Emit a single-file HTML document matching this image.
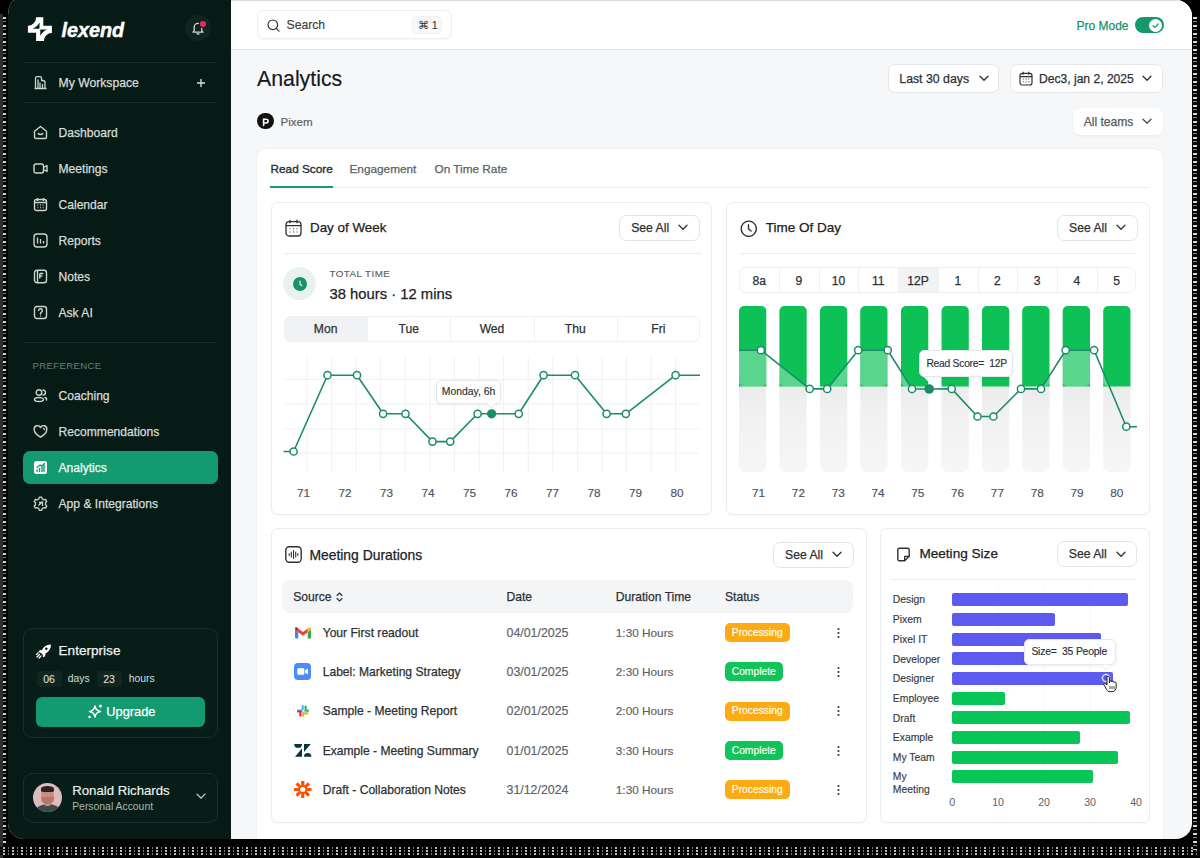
<!DOCTYPE html><html><head><meta charset="utf-8"><style>
*{box-sizing:border-box;margin:0;padding:0}
html,body{width:1200px;height:858px;overflow:hidden;background:#000}
body{position:relative;font-family:"Liberation Sans",sans-serif;}
.a{position:absolute;white-space:nowrap}
</style></head><body>
<div class="a" style="left:0px;top:14px;width:2.5px;height:844px;background:#2e2e2e"></div>
<div class="a" style="left:2.5px;top:14px;width:3.5px;height:830px;background:repeating-linear-gradient(180deg,#000 0 3px,#d8d8d8 3px 5px,#000 5px 7px,#888 7px 8px)"></div>
<div class="a" style="left:0px;top:847px;width:1200px;height:9px;background:repeating-linear-gradient(90deg,#000 0 3px,#bbb 3px 5px,#000 5px 8px,#777 8px 9px),#000;-webkit-mask:repeating-linear-gradient(180deg,#000 0 2px,transparent 2px 3px)"></div>
<div class="a" style="left:1193px;top:14px;width:3.5px;height:836px;background:repeating-linear-gradient(180deg,#000 0 3px,#d8d8d8 3px 5px,#000 5px 7px,#888 7px 8px)"></div>
<div class="a" style="left:7.5px;top:0;width:1184.5px;height:839px;border-radius:7px 16px 16px 16px / 16px 16px 16px 16px;overflow:hidden;background:#f6f7f9">
<div class="a" style="left:-7.5px;top:0;width:1200px;height:858px">
<div class="a" style="left:0px;top:0px;width:231px;height:858px;background:#061b16"></div>
<div class="a" style="left:231px;top:0px;width:970px;height:50px;background:#fff;border-bottom:1px solid #e3e5e8;border-top:1px solid #dcdcdc"></div>
<svg class="a" style="left:25px;top:15px;" width="30" height="29" viewBox="0 0 30 29" fill="none"><path fill="#fff" fill-rule="evenodd" d="M11.1 2.2H18.3V10.8H26.9V17.9A8.1 8.1 0 0 0 18.9 26H11.1V17.8H2.9V10.8A8.3 8.6 0 0 0 11.1 2.2Z M14.6 7.3Q12.6 11.6 7.6 13.8H14.4Z M22 14.6Q17.6 16.4 15.3 21V14.6Z"/></svg>
<div class="a" style="left:61.5px;top:19.6px;line-height:20px;font-size:19.8px;color:#fff;font-weight:700;font-style:italic;-webkit-text-stroke:.45px #fff;">lexend</div>
<div class="a" style="left:185px;top:15px;width:26px;height:26px;border-radius:50%;background:#0f2520"></div>
<svg class="a" style="left:191px;top:21px;" width="14" height="14" viewBox="0 0 14 14" fill="none"><path d="M3.2 9.8V6.2a3.8 3.8 0 0 1 7.6 0v3.6l1.2 1.4H2z" stroke="#cdd5d2" stroke-width="1.3" stroke-linejoin="round"/><path d="M5.8 12.3a1.3 1.3 0 0 0 2.4 0" stroke="#cdd5d2" stroke-width="1.3"/></svg>
<div class="a" style="left:200px;top:21.3px;width:5.6px;height:5.6px;border-radius:50%;background:#e8295a;box-shadow:0 0 0 1px #0a1f1a"></div>
<div class="a" style="left:24px;top:62px;width:193px;height:1px;background:#192f2a"></div>
<div class="a" style="left:24px;top:102px;width:193px;height:1px;background:#192f2a"></div>
<svg class="a" style="left:33px;top:75px;" width="15" height="15" viewBox="0 0 15 15" fill="none"><path d="M2.5 13.5V3.2a1.5 1.5 0 0 1 1.5-1.5h3a1.5 1.5 0 0 1 1.5 1.5v2.3h1.5a2 2 0 0 1 2 2v6M1.5 13.5h12M5 4.5v9M7 7.5v6M9.5 9v4.5" stroke="#cdd5d2" stroke-width="1.3" stroke-linejoin="round"/></svg>
<div class="a" style="left:58.5px;top:72.5px;line-height:20px;font-size:12.2px;color:#d6ddda;-webkit-text-stroke:0.25px #d6ddda;">My Workspace</div>
<svg class="a" style="left:196px;top:78px;" width="10" height="10" viewBox="0 0 10 10" fill="none"><path d="M5 1v8M1 5h8" stroke="#d6ddda" stroke-width="1.4"/></svg>
<svg class="a" style="left:33px;top:125.0px;" width="15" height="15" viewBox="0 0 15 15" fill="none"><path d="M1.5 6.2L7.5 1.5l6 4.7v5.8a1.5 1.5 0 0 1-1.5 1.5H3a1.5 1.5 0 0 1-1.5-1.5z" stroke="#cdd5d2" stroke-width="1.4" stroke-linejoin="round"/><path d="M5.2 8.6q2.3 1.8 4.6 0" stroke="#cdd5d2" stroke-width="1.4" stroke-linecap="round"/></svg>
<div class="a" style="left:58.5px;top:122.5px;line-height:20px;font-size:12.1px;color:#d6ddda;-webkit-text-stroke:0.25px #d6ddda;">Dashboard</div>
<svg class="a" style="left:33px;top:161.0px;" width="15" height="15" viewBox="0 0 15 15" fill="none"><rect x="1" y="3" width="9.5" height="9" rx="2" stroke="#cdd5d2" stroke-width="1.4"/><path d="M10.5 6.5l3.5-2v6l-3.5-2" stroke="#cdd5d2" stroke-width="1.4" stroke-linejoin="round"/></svg>
<div class="a" style="left:58.5px;top:158.5px;line-height:20px;font-size:12.1px;color:#d6ddda;-webkit-text-stroke:0.25px #d6ddda;">Meetings</div>
<svg class="a" style="left:33px;top:197.0px;" width="15" height="15" viewBox="0 0 15 15" fill="none"><rect x="1.5" y="2.5" width="12" height="11" rx="2" stroke="#cdd5d2" stroke-width="1.4"/><path d="M1.5 5.5h12M4.5 1v3M10.5 1v3" stroke="#cdd5d2" stroke-width="1.4"/><path d="M4.5 8h.8M7.1 8h.8M9.7 8h.8M4.5 10.5h.8M7.1 10.5h.8M9.7 10.5h.8" stroke="#cdd5d2" stroke-width="1.3"/></svg>
<div class="a" style="left:58.5px;top:194.5px;line-height:20px;font-size:12.1px;color:#d6ddda;-webkit-text-stroke:0.25px #d6ddda;">Calendar</div>
<svg class="a" style="left:33px;top:233.0px;" width="15" height="15" viewBox="0 0 15 15" fill="none"><rect x="1" y="1" width="13" height="13" rx="3" stroke="#cdd5d2" stroke-width="1.4"/><path d="M4.5 4.5v6M7.5 6v4.5M10.5 8v2.5" stroke="#cdd5d2" stroke-width="1.3"/></svg>
<div class="a" style="left:58.5px;top:230.5px;line-height:20px;font-size:12.1px;color:#d6ddda;-webkit-text-stroke:0.25px #d6ddda;">Reports</div>
<svg class="a" style="left:33px;top:269.0px;" width="15" height="15" viewBox="0 0 15 15" fill="none"><rect x="1.5" y="1.2" width="12" height="12.6" rx="2.5" stroke="#cdd5d2" stroke-width="1.4"/><path d="M4.5 1.5v12M6.8 4.5h3.5M6.8 4.5v5M6.8 7h2.5" stroke="#cdd5d2" stroke-width="1.4"/></svg>
<div class="a" style="left:58.5px;top:266.5px;line-height:20px;font-size:12.1px;color:#d6ddda;-webkit-text-stroke:0.25px #d6ddda;">Notes</div>
<svg class="a" style="left:33px;top:305.0px;" width="15" height="15" viewBox="0 0 15 15" fill="none"><rect x="1.5" y="1.5" width="12" height="12" rx="2.5" stroke="#cdd5d2" stroke-width="1.4"/><path d="M5.6 5.6a1.9 1.9 0 1 1 2.6 1.8c-.5.2-.7.6-.7 1.1v.5" stroke="#cdd5d2" stroke-width="1.4" stroke-linecap="round"/><circle cx="7.5" cy="10.9" r=".7" fill="#cdd5d2"/></svg>
<div class="a" style="left:58.5px;top:302.5px;line-height:20px;font-size:12.1px;color:#d6ddda;-webkit-text-stroke:0.25px #d6ddda;">Ask AI</div>
<div class="a" style="left:24px;top:342px;width:193px;height:1px;background:#192f2a"></div>
<div class="a" style="left:32.5px;top:356px;line-height:20px;font-size:9.6px;color:#6d7d78;letter-spacing:0.35px;">PREFERENCE</div>
<svg class="a" style="left:33px;top:388.0px;" width="15" height="15" viewBox="0 0 15 15" fill="none"><circle cx="6" cy="4.5" r="2.8" stroke="#cdd5d2" stroke-width="1.4"/><ellipse cx="6" cy="11.5" rx="4.5" ry="2" stroke="#cdd5d2" stroke-width="1.4"/><path d="M10 2a2.5 2.5 0 0 1 0 5M12 9.5q2 .8 1.5 2.5" stroke="#cdd5d2" stroke-width="1.4" stroke-linecap="round"/></svg>
<div class="a" style="left:58.5px;top:385.5px;line-height:20px;font-size:12.1px;color:#d6ddda;-webkit-text-stroke:0.25px #d6ddda;">Coaching</div>
<svg class="a" style="left:33px;top:424.0px;" width="15" height="15" viewBox="0 0 15 15" fill="none"><path d="M7.5 13.2S1.2 9.5 1.2 5.2A3.3 3.3 0 0 1 7.5 3.6a3.3 3.3 0 0 1 6.3 1.6c0 4.3-6.3 8-6.3 8z" stroke="#cdd5d2" stroke-width="1.4" stroke-linejoin="round"/><path d="M10.3 4.3q1 .3 1.3 1.3" stroke="#cdd5d2" stroke-width="1.3" stroke-linecap="round"/></svg>
<div class="a" style="left:58.5px;top:421.5px;line-height:20px;font-size:12.1px;color:#d6ddda;-webkit-text-stroke:0.25px #d6ddda;">Recommendations</div>
<div class="a" style="left:23px;top:451px;width:195px;height:33px;background:#149a70;border-radius:7px"></div>
<svg class="a" style="left:33px;top:460px;" width="15" height="15" viewBox="0 0 15 15" fill="none"><rect x="1" y="1" width="13" height="13" rx="2.5" fill="#fff"/><path d="M4 11.5v-1.5M6.5 11.5V8.5M9 11.5V7M11 11.5V5.5M4 7.5l3-2.5 2 1L11.5 3.5" stroke="#149a70" stroke-width="1.4" stroke-linecap="round"/></svg>
<div class="a" style="left:58.5px;top:457.5px;line-height:20px;font-size:12.1px;color:#f2fbf7;-webkit-text-stroke:0.25px #f2fbf7;">Analytics</div>
<svg class="a" style="left:33px;top:496.0px;" width="15" height="15" viewBox="0 0 15 15" fill="none"><path d="M6.3 1.2h2.4l.5 1.8 1.6.9 1.8-.5 1.2 2.1-1.3 1.3v1.9l1.3 1.3-1.2 2.1-1.8-.5-1.6.9-.5 1.8H6.3l-.5-1.8-1.6-.9-1.8.5L1.2 10l1.3-1.3V6.8L1.2 5.5l1.2-2.1 1.8.5 1.6-.9z" stroke="#cdd5d2" stroke-width="1.3" stroke-linejoin="round"/><path d="M5.5 9.5L9.5 5.5M6 6.5h3.5V10" stroke="#cdd5d2" stroke-width="1.3"/></svg>
<div class="a" style="left:58.5px;top:493.5px;line-height:20px;font-size:12.1px;color:#d6ddda;-webkit-text-stroke:0.25px #d6ddda;">App &amp; Integrations</div>
<div class="a" style="left:22.5px;top:628px;width:195px;height:110px;border:1px solid #1b2e2a;border-radius:9px;background:#071d18"></div>
<svg class="a" style="left:36px;top:643px;" width="16" height="16" viewBox="0 0 16 16" fill="none"><path d="M14.5 1.5c-4 .2-6.8 2.2-8.6 5.5l-2.3.3-1.5 2 2.6.4 2.1 2.1.4 2.6 2-1.5.3-2.3c3.3-1.8 5.3-4.6 5.5-8.6z" fill="#fff"/><circle cx="10.3" cy="5.7" r="1.3" fill="#071d18"/><path d="M3.5 11.5L1 14M5 13l-2 2M2 10l-1.5 1.5" stroke="#fff" stroke-width="1.2" stroke-linecap="round"/></svg>
<div class="a" style="left:58.5px;top:641px;line-height:20px;font-size:13.6px;color:#f1f4f3;-webkit-text-stroke:0.25px #f1f4f3;">Enterprise</div>
<div class="a" style="left:36.5px;top:670.5px;width:25px;height:16px;background:#112621;border-radius:3px"></div>
<div class="a" style="left:36.5px;top:668.5px;line-height:20px;font-size:10.5px;color:#e3e8e6;width:25px;text-align:center;">06</div>
<div class="a" style="left:67.7px;top:668.5px;line-height:20px;font-size:10.4px;color:#d6ddda;">days</div>
<div class="a" style="left:96.5px;top:670.5px;width:25px;height:16px;background:#112621;border-radius:3px"></div>
<div class="a" style="left:96.5px;top:668.5px;line-height:20px;font-size:10.5px;color:#e3e8e6;width:25px;text-align:center;">23</div>
<div class="a" style="left:128.7px;top:668.5px;line-height:20px;font-size:10.4px;color:#d6ddda;">hours</div>
<div class="a" style="left:36px;top:696.5px;width:169px;height:30px;background:#149a70;border-radius:6px"></div>
<svg class="a" style="left:87px;top:703px;" width="16" height="16" viewBox="0 0 16 16" fill="none"><path d="M8 2.9Q8.7 7.8 13.6 8.5Q8.7 9.2 8 14.1Q7.3 9.2 2.4 8.5Q7.3 7.8 8 2.9Z" stroke="#fff" stroke-width="1.4" stroke-linejoin="round"/><circle cx="13.4" cy="3" r="1.5" fill="#fff"/><circle cx="2.6" cy="14" r="1.3" fill="#fff"/></svg>
<div class="a" style="left:106.3px;top:701.5px;line-height:20px;font-size:12.8px;color:#fff;-webkit-text-stroke:0.25px #fff;">Upgrade</div>
<div class="a" style="left:22.5px;top:772.5px;width:195px;height:50px;border:1px solid #1b2e2a;border-radius:9px;background:#071d18"></div>
<div class="a" style="left:32.7px;top:782.5px;width:29.5px;height:29.5px;border-radius:50%;background:#dcbcc0;overflow:hidden"><div class="a" style="left:3px;top:21px;width:24px;height:14px;border-radius:50% 50% 0 0;background:#3f4b49"></div><div class="a" style="left:11.5px;top:17px;width:7px;height:6px;background:#c4907e;border-radius:0 0 40% 40%"></div><div class="a" style="left:8.5px;top:5px;width:12.5px;height:16px;border-radius:45% 45% 48% 48%;background:#c98e7c"></div><div class="a" style="left:8.5px;top:14px;width:12.5px;height:7px;border-radius:0 0 50% 50%;background:#7a4a3a;opacity:.3"></div><div class="a" style="left:8px;top:3.5px;width:13.5px;height:5.5px;border-radius:50% 50% 25% 25%;background:#2a2422"></div></div>
<div class="a" style="left:72.2px;top:781px;line-height:20px;font-size:13.2px;color:#eef2f0;-webkit-text-stroke:0.15px #eef2f0;">Ronald Richards</div>
<div class="a" style="left:72.2px;top:797px;line-height:20px;font-size:10.4px;color:#aab6b2;">Personal Account</div>
<svg class="a" style="left:196px;top:793px;" width="10" height="7" viewBox="0 0 10 7" fill="none"><path d="M1 1.2l4 4 4-4" stroke="#d6ddda" stroke-width="1.2" stroke-linecap="round" stroke-linejoin="round"/></svg>
<div class="a" style="left:257px;top:10.3px;width:195px;height:28.7px;background:#fff;border:1px solid #eceef0;border-radius:7px;box-shadow:0 1px 2px rgba(16,24,40,.04)"></div>
<svg class="a" style="left:267px;top:19px;" width="13" height="13" viewBox="0 0 13 13" fill="none"><circle cx="5.8" cy="5.8" r="4.8" stroke="#2f3439" stroke-width="1.2"/><path d="M9.3 9.3l2.8 2.8" stroke="#2f3439" stroke-width="1.2" stroke-linecap="round"/></svg>
<div class="a" style="left:286.5px;top:15px;line-height:20px;font-size:12.2px;color:#3a3f44;-webkit-text-stroke:0.15px #3a3f44;">Search</div>
<div class="a" style="left:412px;top:16px;width:30px;height:18px;background:#f7f8f9;border:1px solid #f0f1f3;border-radius:5px"></div>
<div class="a" style="left:417.5px;top:15px;line-height:20px;font-size:11px;color:#2f3439;">&#8984;</div>
<div class="a" style="left:431.5px;top:15px;line-height:20px;font-size:11.5px;color:#2f3439;">1</div>
<div class="a" style="left:1076.5px;top:15.5px;line-height:20px;font-size:12px;color:#17936b;-webkit-text-stroke:0.25px #17936b;">Pro Mode</div>
<div class="a" style="left:1135px;top:17px;width:28.5px;height:16px;background:#15986c;border-radius:8px"></div>
<div class="a" style="left:1149px;top:18.5px;width:13px;height:13px;background:#fff;border-radius:50%"></div>
<svg class="a" style="left:1150px;top:19.5px;" width="11" height="11" viewBox="0 0 11 11" fill="none"><path d="M3 5.6l1.8 1.8L8.2 4" stroke="#15986c" stroke-width="1.2" stroke-linecap="round" stroke-linejoin="round"/></svg>
<div class="a" style="left:257px;top:69px;line-height:20px;font-size:21.3px;color:#15191d;-webkit-text-stroke:0.15px #15191d;">Analytics</div>
<div class="a" style="left:257px;top:112.5px;width:16.5px;height:16.5px;border-radius:50%;background:#111"></div>
<svg class="a" style="left:260px;top:115.5px;" width="11" height="11" viewBox="0 0 11 11" fill="none"><path d="M3.6 9.5V3.2h2.6a1.9 1.9 0 0 1 0 3.8H4" stroke="#fff" stroke-width="1.6" stroke-linecap="round"/></svg>
<div class="a" style="left:280.5px;top:111.5px;line-height:20px;font-size:11.6px;color:#5a6066;-webkit-text-stroke:0.15px #5a6066;">Pixem</div>
<div class="a" style="left:887.5px;top:64px;width:111.5px;height:28.5px;background:#fff;border:1px solid #e4e6e9;border-radius:7px"></div>
<div class="a" style="left:899.3px;top:68.5px;line-height:20px;font-size:12.3px;color:#2d3136;-webkit-text-stroke:0.25px #2d3136;">Last 30 days</div>
<svg class="a" style="left:978.5px;top:75px;" width="10" height="7" viewBox="0 0 10 7" fill="none"><path d="M1 1.3l4 4 4-4" stroke="#2d3136" stroke-width="1.3" stroke-linecap="round" stroke-linejoin="round"/></svg>
<div class="a" style="left:1009.5px;top:64px;width:153.5px;height:28.5px;background:#fff;border:1px solid #e4e6e9;border-radius:7px"></div>
<svg class="a" style="left:1019px;top:71px;" width="14" height="15" viewBox="0 0 14 15" fill="none"><rect x="1" y="2.3" width="12" height="11.7" rx="2.2" stroke="#2d3136" stroke-width="1.2"/><path d="M1 5.6h12M4.2 .8v3M9.8 .8v3" stroke="#2d3136" stroke-width="1.2"/><path d="M3.8 8h.9M6.6 8h.9M9.4 8h.9M3.8 10.8h.9M6.6 10.8h.9M9.4 10.8h.9" stroke="#2d3136" stroke-width="1"/></svg>
<div class="a" style="left:1039px;top:68.5px;line-height:20px;font-size:12.1px;color:#2d3136;-webkit-text-stroke:0.25px #2d3136;">Dec3, jan 2, 2025</div>
<svg class="a" style="left:1142px;top:75px;" width="10" height="7" viewBox="0 0 10 7" fill="none"><path d="M1 1.3l4 4 4-4" stroke="#2d3136" stroke-width="1.3" stroke-linecap="round" stroke-linejoin="round"/></svg>
<div class="a" style="left:1072.5px;top:107.5px;width:90px;height:27.5px;background:#fff;border-radius:7px;box-shadow:0 1px 3px rgba(16,24,40,.06)"></div>
<div class="a" style="left:1083.7px;top:111.5px;line-height:20px;font-size:12.1px;color:#555b61;-webkit-text-stroke:0.25px #555b61;">All teams</div>
<svg class="a" style="left:1142px;top:118px;" width="10" height="7" viewBox="0 0 10 7" fill="none"><path d="M1 1.3l4 4 4-4" stroke="#444a50" stroke-width="1.3" stroke-linecap="round" stroke-linejoin="round"/></svg>
<div class="a" style="left:257px;top:149px;width:906px;height:720px;background:#fff;border-radius:9px;box-shadow:0 0 0 1px #f0f1f3"></div>
<div class="a" style="left:270.5px;top:158.5px;line-height:20px;font-size:11.8px;color:#2a2e33;-webkit-text-stroke:0.35px #2a2e33;">Read Score</div>
<div class="a" style="left:349.5px;top:158.5px;line-height:20px;font-size:11.8px;color:#5b6167;-webkit-text-stroke:0.25px #5b6167;">Engagement</div>
<div class="a" style="left:434.5px;top:158.5px;line-height:20px;font-size:11.8px;color:#5b6167;-webkit-text-stroke:0.25px #5b6167;">On Time Rate</div>
<div class="a" style="left:270px;top:187px;width:880px;height:1px;background:#eef0f2"></div>
<div class="a" style="left:270px;top:186px;width:62.5px;height:2px;background:#1a9c72"></div>
<div class="a" style="left:270.5px;top:201.7px;width:441.5px;height:313.3px;background:#fff;border:1px solid #eaecef;border-radius:7px;box-shadow:0 1px 2px rgba(16,24,40,.03)"></div>
<svg class="a" style="left:285px;top:219px;" width="17" height="18" viewBox="0 0 17 18" fill="none"><rect x="1" y="2.6" width="15" height="14.4" rx="3" stroke="#2d3136" stroke-width="1.3"/><path d="M1 6.6h15M5 .8v3.5M12 .8v3.5" stroke="#2d3136" stroke-width="1.3"/><path d="M4.5 9.8h1M8 9.8h1M11.5 9.8h1M4.5 13h1M8 13h1M11.5 13h1" stroke="#2d3136" stroke-width="1.1"/></svg>
<div class="a" style="left:310px;top:218px;line-height:20px;font-size:13.4px;color:#1d2125;-webkit-text-stroke:0.25px #1d2125;">Day of Week</div>
<div class="a" style="left:619.2px;top:214.8px;width:80.5px;height:26px;background:#fff;border:1px solid #e3e5e8;border-radius:7px"></div>
<div class="a" style="left:631.2px;top:217.8px;line-height:20px;font-size:12.2px;color:#2d3136;-webkit-text-stroke:0.25px #2d3136;">See All</div>
<svg class="a" style="left:678.2px;top:224.3px;" width="10" height="7" viewBox="0 0 10 7" fill="none"><path d="M1 1.3l4 4 4-4" stroke="#2d3136" stroke-width="1.3" stroke-linecap="round" stroke-linejoin="round"/></svg>
<div class="a" style="left:283px;top:253px;width:418.5px;height:1px;background:#eceef0"></div>
<div class="a" style="left:282.8px;top:267px;width:33px;height:33px;background:#e8f3ee;border-radius:50%"></div>
<div class="a" style="left:292.8px;top:276.5px;width:14px;height:14px;background:#17936b;border-radius:50%"></div>
<svg class="a" style="left:292.8px;top:276.5px;" width="14" height="14" viewBox="0 0 14 14" fill="none"><path d="M7 4v3.2l1.8 1.4" stroke="#fff" stroke-width="1.1" stroke-linecap="round"/></svg>
<div class="a" style="left:329.5px;top:263.5px;line-height:20px;font-size:9.8px;color:#5b6166;-webkit-text-stroke:0.15px #5b6166;letter-spacing:0.45px;">TOTAL TIME</div>
<div class="a" style="left:329.5px;top:283.5px;line-height:20px;font-size:14.8px;color:#1d2125;-webkit-text-stroke:0.25px #1d2125;">38 hours &middot; 12 mins</div>
<div class="a" style="left:284px;top:316px;width:416px;height:25.5px;background:#fff;border:1px solid #eef0f2;border-radius:7px"></div>
<div class="a" style="left:284px;top:316px;width:83.2px;height:25.5px;background:#f1f2f4;border-radius:7px 0 0 7px"></div>
<div class="a" style="left:367.2px;top:317px;width:1px;height:23.5px;background:#eef0f2"></div>
<div class="a" style="left:450.4px;top:317px;width:1px;height:23.5px;background:#eef0f2"></div>
<div class="a" style="left:533.6px;top:317px;width:1px;height:23.5px;background:#eef0f2"></div>
<div class="a" style="left:616.8px;top:317px;width:1px;height:23.5px;background:#eef0f2"></div>
<div class="a" style="left:225.60000000000002px;width:200px;text-align:center;top:319px;line-height:20px;font-size:12.1px;color:#2d3136;-webkit-text-stroke:0.25px #2d3136;">Mon</div>
<div class="a" style="left:308.8px;width:200px;text-align:center;top:319px;line-height:20px;font-size:12.1px;color:#2d3136;-webkit-text-stroke:0.25px #2d3136;">Tue</div>
<div class="a" style="left:392.0px;width:200px;text-align:center;top:319px;line-height:20px;font-size:12.1px;color:#2d3136;-webkit-text-stroke:0.25px #2d3136;">Wed</div>
<div class="a" style="left:475.20000000000005px;width:200px;text-align:center;top:319px;line-height:20px;font-size:12.1px;color:#2d3136;-webkit-text-stroke:0.25px #2d3136;">Thu</div>
<div class="a" style="left:558.4px;width:200px;text-align:center;top:319px;line-height:20px;font-size:12.1px;color:#2d3136;-webkit-text-stroke:0.25px #2d3136;">Fri</div>
<svg class="a" style="left:0px;top:0px;" width="1200" height="858" viewBox="0 0 1200 858" fill="none"><path d="M307.0 355.8V472" stroke="#f0f1f3" stroke-width="1"/><path d="M331.6 355.8V472" stroke="#f0f1f3" stroke-width="1"/><path d="M356.2 355.8V472" stroke="#f0f1f3" stroke-width="1"/><path d="M380.7 355.8V472" stroke="#f0f1f3" stroke-width="1"/><path d="M405.3 355.8V472" stroke="#f0f1f3" stroke-width="1"/><path d="M429.9 355.8V472" stroke="#f0f1f3" stroke-width="1"/><path d="M454.5 355.8V472" stroke="#f0f1f3" stroke-width="1"/><path d="M479.1 355.8V472" stroke="#f0f1f3" stroke-width="1"/><path d="M503.6 355.8V472" stroke="#f0f1f3" stroke-width="1"/><path d="M528.2 355.8V472" stroke="#f0f1f3" stroke-width="1"/><path d="M552.8 355.8V472" stroke="#f0f1f3" stroke-width="1"/><path d="M577.4 355.8V472" stroke="#f0f1f3" stroke-width="1"/><path d="M602.0 355.8V472" stroke="#f0f1f3" stroke-width="1"/><path d="M626.5 355.8V472" stroke="#f0f1f3" stroke-width="1"/><path d="M651.1 355.8V472" stroke="#f0f1f3" stroke-width="1"/><path d="M675.7 355.8V472" stroke="#f0f1f3" stroke-width="1"/><path d="M284 379.3H700" stroke="#f0f1f3" stroke-width="1"/><path d="M284 404H700" stroke="#f0f1f3" stroke-width="1"/><path d="M284 428.8H700" stroke="#f0f1f3" stroke-width="1"/><path d="M284 453.2H700" stroke="#f0f1f3" stroke-width="1"/><path d="M283.5,451.5 L293.6,451.5 L327.5,375.2 L357,375.2 L383.1,413.8 L405.5,413.8 L432.5,441.6 L450.2,441.6 L477.6,413.8 L491.6,413.8 L518.7,413.8 L543.6,375.2 L575,375.2 L606.6,413.8 L625.8,413.8 L675.6,375.2 L700,375.2" stroke="#1a8d68" stroke-width="1.6" fill="none" stroke-linejoin="round"/><circle cx="293.6" cy="451.5" r="3.6" fill="#fff" stroke="#1a8d68" stroke-width="1.5"/><circle cx="327.5" cy="375.2" r="3.6" fill="#fff" stroke="#1a8d68" stroke-width="1.5"/><circle cx="357" cy="375.2" r="3.6" fill="#fff" stroke="#1a8d68" stroke-width="1.5"/><circle cx="383.1" cy="413.8" r="3.6" fill="#fff" stroke="#1a8d68" stroke-width="1.5"/><circle cx="405.5" cy="413.8" r="3.6" fill="#fff" stroke="#1a8d68" stroke-width="1.5"/><circle cx="432.5" cy="441.6" r="3.6" fill="#fff" stroke="#1a8d68" stroke-width="1.5"/><circle cx="450.2" cy="441.6" r="3.6" fill="#fff" stroke="#1a8d68" stroke-width="1.5"/><circle cx="477.6" cy="413.8" r="3.6" fill="#fff" stroke="#1a8d68" stroke-width="1.5"/><circle cx="491.6" cy="413.8" r="4.6" fill="#1a8d68"/><circle cx="518.7" cy="413.8" r="3.6" fill="#fff" stroke="#1a8d68" stroke-width="1.5"/><circle cx="543.6" cy="375.2" r="3.6" fill="#fff" stroke="#1a8d68" stroke-width="1.5"/><circle cx="575" cy="375.2" r="3.6" fill="#fff" stroke="#1a8d68" stroke-width="1.5"/><circle cx="606.6" cy="413.8" r="3.6" fill="#fff" stroke="#1a8d68" stroke-width="1.5"/><circle cx="625.8" cy="413.8" r="3.6" fill="#fff" stroke="#1a8d68" stroke-width="1.5"/><circle cx="675.6" cy="375.2" r="3.6" fill="#fff" stroke="#1a8d68" stroke-width="1.5"/></svg>
<div class="a" style="left:436.3px;top:379.5px;width:65px;height:24.5px;background:#fff;border:1px solid #e6e8eb;border-radius:5px;box-shadow:0 1px 3px rgba(0,0,0,.06)"></div>
<svg class="a" style="left:486px;top:403px;" width="10" height="6" viewBox="0 0 10 6" fill="none"><path d="M0 0L5 5L10 0" fill="#fff" stroke="#e6e8eb" stroke-width="1"/><path d="M0.5 -0.5H9.5" stroke="#fff" stroke-width="1.5"/></svg>
<div class="a" style="left:441.8px;top:381.5px;line-height:20px;font-size:10.4px;color:#2d3136;-webkit-text-stroke:0.15px #2d3136;">Monday, 6h</div>
<div class="a" style="left:203.60000000000002px;width:200px;text-align:center;top:483.3px;line-height:20px;font-size:11.8px;color:#4d5358;-webkit-text-stroke:0.15px #4d5358;">71</div>
<div class="a" style="left:245.10000000000002px;width:200px;text-align:center;top:483.3px;line-height:20px;font-size:11.8px;color:#4d5358;-webkit-text-stroke:0.15px #4d5358;">72</div>
<div class="a" style="left:286.6px;width:200px;text-align:center;top:483.3px;line-height:20px;font-size:11.8px;color:#4d5358;-webkit-text-stroke:0.15px #4d5358;">73</div>
<div class="a" style="left:328.1px;width:200px;text-align:center;top:483.3px;line-height:20px;font-size:11.8px;color:#4d5358;-webkit-text-stroke:0.15px #4d5358;">74</div>
<div class="a" style="left:369.6px;width:200px;text-align:center;top:483.3px;line-height:20px;font-size:11.8px;color:#4d5358;-webkit-text-stroke:0.15px #4d5358;">75</div>
<div class="a" style="left:411.1px;width:200px;text-align:center;top:483.3px;line-height:20px;font-size:11.8px;color:#4d5358;-webkit-text-stroke:0.15px #4d5358;">76</div>
<div class="a" style="left:452.6px;width:200px;text-align:center;top:483.3px;line-height:20px;font-size:11.8px;color:#4d5358;-webkit-text-stroke:0.15px #4d5358;">77</div>
<div class="a" style="left:494.1px;width:200px;text-align:center;top:483.3px;line-height:20px;font-size:11.8px;color:#4d5358;-webkit-text-stroke:0.15px #4d5358;">78</div>
<div class="a" style="left:535.6px;width:200px;text-align:center;top:483.3px;line-height:20px;font-size:11.8px;color:#4d5358;-webkit-text-stroke:0.15px #4d5358;">79</div>
<div class="a" style="left:577.1px;width:200px;text-align:center;top:483.3px;line-height:20px;font-size:11.8px;color:#4d5358;-webkit-text-stroke:0.15px #4d5358;">80</div>
<div class="a" style="left:726px;top:201.7px;width:424px;height:313.3px;background:#fff;border:1px solid #eaecef;border-radius:7px;box-shadow:0 1px 2px rgba(16,24,40,.03)"></div>
<svg class="a" style="left:739.5px;top:219.5px;" width="17.5" height="17.5" viewBox="0 0 17.5 17.5" fill="none"><circle cx="8.75" cy="8.75" r="7.6" stroke="#2d3136" stroke-width="1.4"/><path d="M8.5 4.8v4.2l2.6 2" stroke="#2d3136" stroke-width="1.4" stroke-linecap="round" stroke-linejoin="round"/></svg>
<div class="a" style="left:765.8px;top:218px;line-height:20px;font-size:13.5px;color:#1d2125;-webkit-text-stroke:0.25px #1d2125;">Time Of Day</div>
<div class="a" style="left:1057px;top:214.8px;width:80.5px;height:26px;background:#fff;border:1px solid #e3e5e8;border-radius:7px"></div>
<div class="a" style="left:1069px;top:217.8px;line-height:20px;font-size:12.2px;color:#2d3136;-webkit-text-stroke:0.25px #2d3136;">See All</div>
<svg class="a" style="left:1116px;top:224.3px;" width="10" height="7" viewBox="0 0 10 7" fill="none"><path d="M1 1.3l4 4 4-4" stroke="#2d3136" stroke-width="1.3" stroke-linecap="round" stroke-linejoin="round"/></svg>
<div class="a" style="left:739px;top:253px;width:398px;height:1px;background:#eceef0"></div>
<div class="a" style="left:739.3px;top:267.4px;width:397.2px;height:25.5px;background:#fff;border:1px solid #eef0f2;border-radius:7px"></div>
<div class="a" style="left:898.18px;top:267.9px;width:39.720000000000006px;height:24.5px;background:#f2f3f4"></div>
<div class="a" style="left:779.02px;top:268.4px;width:1px;height:23.5px;background:#eef0f2"></div>
<div class="a" style="left:818.74px;top:268.4px;width:1px;height:23.5px;background:#eef0f2"></div>
<div class="a" style="left:858.46px;top:268.4px;width:1px;height:23.5px;background:#eef0f2"></div>
<div class="a" style="left:898.18px;top:268.4px;width:1px;height:23.5px;background:#eef0f2"></div>
<div class="a" style="left:937.9px;top:268.4px;width:1px;height:23.5px;background:#eef0f2"></div>
<div class="a" style="left:977.62px;top:268.4px;width:1px;height:23.5px;background:#eef0f2"></div>
<div class="a" style="left:1017.3399999999999px;top:268.4px;width:1px;height:23.5px;background:#eef0f2"></div>
<div class="a" style="left:1057.06px;top:268.4px;width:1px;height:23.5px;background:#eef0f2"></div>
<div class="a" style="left:1096.78px;top:268.4px;width:1px;height:23.5px;background:#eef0f2"></div>
<div class="a" style="left:659.16px;width:200px;text-align:center;top:270.6px;line-height:20px;font-size:12.1px;color:#2d3136;-webkit-text-stroke:0.25px #2d3136;">8a</div>
<div class="a" style="left:698.88px;width:200px;text-align:center;top:270.6px;line-height:20px;font-size:12.1px;color:#2d3136;-webkit-text-stroke:0.25px #2d3136;">9</div>
<div class="a" style="left:738.6px;width:200px;text-align:center;top:270.6px;line-height:20px;font-size:12.1px;color:#2d3136;-webkit-text-stroke:0.25px #2d3136;">10</div>
<div class="a" style="left:778.32px;width:200px;text-align:center;top:270.6px;line-height:20px;font-size:12.1px;color:#2d3136;-webkit-text-stroke:0.25px #2d3136;">11</div>
<div class="a" style="left:818.04px;width:200px;text-align:center;top:270.6px;line-height:20px;font-size:12.1px;color:#2d3136;-webkit-text-stroke:0.25px #2d3136;">12P</div>
<div class="a" style="left:857.76px;width:200px;text-align:center;top:270.6px;line-height:20px;font-size:12.1px;color:#2d3136;-webkit-text-stroke:0.25px #2d3136;">1</div>
<div class="a" style="left:897.48px;width:200px;text-align:center;top:270.6px;line-height:20px;font-size:12.1px;color:#2d3136;-webkit-text-stroke:0.25px #2d3136;">2</div>
<div class="a" style="left:937.1999999999998px;width:200px;text-align:center;top:270.6px;line-height:20px;font-size:12.1px;color:#2d3136;-webkit-text-stroke:0.25px #2d3136;">3</div>
<div class="a" style="left:976.9199999999998px;width:200px;text-align:center;top:270.6px;line-height:20px;font-size:12.1px;color:#2d3136;-webkit-text-stroke:0.25px #2d3136;">4</div>
<div class="a" style="left:1016.6399999999999px;width:200px;text-align:center;top:270.6px;line-height:20px;font-size:12.1px;color:#2d3136;-webkit-text-stroke:0.25px #2d3136;">5</div>
<svg class="a" style="left:0px;top:0px;" width="1200" height="858" viewBox="0 0 1200 858" fill="none"><defs><linearGradient id="gb" x1="0" y1="0" x2="0" y2="1"><stop offset="0" stop-color="#ebebec"/><stop offset=".3" stop-color="#f1f1f2"/><stop offset="1" stop-color="#f6f6f7"/></linearGradient><clipPath id="bars"><rect x="739" y="306" width="27.3" height="80.5" rx="5"/><rect x="779.4" y="306" width="27.3" height="80.5" rx="5"/><rect x="820" y="306" width="27.3" height="80.5" rx="5"/><rect x="860.2" y="306" width="27.3" height="80.5" rx="5"/><rect x="901" y="306" width="27.3" height="80.5" rx="5"/><rect x="941.5" y="306" width="27.3" height="80.5" rx="5"/><rect x="982" y="306" width="27.3" height="80.5" rx="5"/><rect x="1022.2" y="306" width="27.3" height="80.5" rx="5"/><rect x="1062.7" y="306" width="27.3" height="80.5" rx="5"/><rect x="1103.2" y="306" width="27.3" height="80.5" rx="5"/></clipPath></defs><path d="M739 386.3H766.3V466a6 6 0 0 1-6 6H745a6 6 0 0 1-6-6z" fill="url(#gb)"/><path d="M739 386.5V311a5 5 0 0 1 5-5h17.3a5 5 0 0 1 5 5V386.5z" fill="#0dc157"/><path d="M779.4 386.3H806.6999999999999V466a6 6 0 0 1-6 6H785.4a6 6 0 0 1-6-6z" fill="url(#gb)"/><path d="M779.4 386.5V311a5 5 0 0 1 5-5h17.3a5 5 0 0 1 5 5V386.5z" fill="#0dc157"/><path d="M820 386.3H847.3V466a6 6 0 0 1-6 6H826a6 6 0 0 1-6-6z" fill="url(#gb)"/><path d="M820 386.5V311a5 5 0 0 1 5-5h17.3a5 5 0 0 1 5 5V386.5z" fill="#0dc157"/><path d="M860.2 386.3H887.5V466a6 6 0 0 1-6 6H866.2a6 6 0 0 1-6-6z" fill="url(#gb)"/><path d="M860.2 386.5V311a5 5 0 0 1 5-5h17.3a5 5 0 0 1 5 5V386.5z" fill="#0dc157"/><path d="M901 386.3H928.3V466a6 6 0 0 1-6 6H907a6 6 0 0 1-6-6z" fill="url(#gb)"/><path d="M901 386.5V311a5 5 0 0 1 5-5h17.3a5 5 0 0 1 5 5V386.5z" fill="#0dc157"/><path d="M941.5 386.3H968.8V466a6 6 0 0 1-6 6H947.5a6 6 0 0 1-6-6z" fill="url(#gb)"/><path d="M941.5 386.5V311a5 5 0 0 1 5-5h17.3a5 5 0 0 1 5 5V386.5z" fill="#0dc157"/><path d="M982 386.3H1009.3V466a6 6 0 0 1-6 6H988a6 6 0 0 1-6-6z" fill="url(#gb)"/><path d="M982 386.5V311a5 5 0 0 1 5-5h17.3a5 5 0 0 1 5 5V386.5z" fill="#0dc157"/><path d="M1022.2 386.3H1049.5V466a6 6 0 0 1-6 6H1028.2a6 6 0 0 1-6-6z" fill="url(#gb)"/><path d="M1022.2 386.5V311a5 5 0 0 1 5-5h17.3a5 5 0 0 1 5 5V386.5z" fill="#0dc157"/><path d="M1062.7 386.3H1090.0V466a6 6 0 0 1-6 6H1068.7a6 6 0 0 1-6-6z" fill="url(#gb)"/><path d="M1062.7 386.5V311a5 5 0 0 1 5-5h17.3a5 5 0 0 1 5 5V386.5z" fill="#0dc157"/><path d="M1103.2 386.3H1130.5V466a6 6 0 0 1-6 6H1109.2a6 6 0 0 1-6-6z" fill="url(#gb)"/><path d="M1103.2 386.5V311a5 5 0 0 1 5-5h17.3a5 5 0 0 1 5 5V386.5z" fill="#0dc157"/><path d="M739,350.2 L760.9,350.2 L809.7,388.9 L827.2,388.9 L858.2,350.2 L887.7,350.2 L912,388.9 L929.2,389 L951.7,388.9 L977.5,416.5 L993.4,416.5 L1021,388.9 L1041,388.9 L1065.7,350.2 L1094.1,350.2 L1126.3,426.7 L1137,426.7 L1137,500 L739,500z" fill="#fff" fill-opacity=".32" clip-path="url(#bars)"/><path d="M739,350.2 L760.9,350.2 L809.7,388.9 L827.2,388.9 L858.2,350.2 L887.7,350.2 L912,388.9 L929.2,389 L951.7,388.9 L977.5,416.5 L993.4,416.5 L1021,388.9 L1041,388.9 L1065.7,350.2 L1094.1,350.2 L1126.3,426.7 L1137,426.7" stroke="#1a8d68" stroke-width="1.6" fill="none" stroke-linejoin="round"/><circle cx="760.9" cy="350.2" r="3.6" fill="#fff" stroke="#1a8d68" stroke-width="1.5"/><circle cx="809.7" cy="388.9" r="3.6" fill="#fff" stroke="#1a8d68" stroke-width="1.5"/><circle cx="827.2" cy="388.9" r="3.6" fill="#fff" stroke="#1a8d68" stroke-width="1.5"/><circle cx="858.2" cy="350.2" r="3.6" fill="#fff" stroke="#1a8d68" stroke-width="1.5"/><circle cx="887.7" cy="350.2" r="3.6" fill="#fff" stroke="#1a8d68" stroke-width="1.5"/><circle cx="912" cy="388.9" r="3.6" fill="#fff" stroke="#1a8d68" stroke-width="1.5"/><circle cx="929.2" cy="389" r="4.8" fill="#1a8d68" stroke="#fff" stroke-width="0"/><circle cx="951.7" cy="388.9" r="3.6" fill="#fff" stroke="#1a8d68" stroke-width="1.5"/><circle cx="977.5" cy="416.5" r="3.6" fill="#fff" stroke="#1a8d68" stroke-width="1.5"/><circle cx="993.4" cy="416.5" r="3.6" fill="#fff" stroke="#1a8d68" stroke-width="1.5"/><circle cx="1021" cy="388.9" r="3.6" fill="#fff" stroke="#1a8d68" stroke-width="1.5"/><circle cx="1041" cy="388.9" r="3.6" fill="#fff" stroke="#1a8d68" stroke-width="1.5"/><circle cx="1065.7" cy="350.2" r="3.6" fill="#fff" stroke="#1a8d68" stroke-width="1.5"/><circle cx="1094.1" cy="350.2" r="3.6" fill="#fff" stroke="#1a8d68" stroke-width="1.5"/><circle cx="1126.3" cy="426.7" r="3.6" fill="#fff" stroke="#1a8d68" stroke-width="1.5"/></svg>
<div class="a" style="left:918.8px;top:350px;width:94.7px;height:27px;background:#fff;border:1px solid #e6e8eb;border-radius:5px;box-shadow:0 1px 3px rgba(0,0,0,.06)"></div>
<svg class="a" style="left:924px;top:376.5px;" width="10" height="6" viewBox="0 0 10 6" fill="none"><path d="M0 0L5 5L10 0" fill="#fff" stroke="#e6e8eb" stroke-width="1"/><path d="M0.5 -0.5H9.5" stroke="#fff" stroke-width="1.5"/></svg>
<div class="a" style="left:926.4px;top:353.5px;line-height:20px;font-size:10.3px;color:#2d3136;-webkit-text-stroke:0.15px #2d3136;letter-spacing:-0.25px;">Read Score=&nbsp; 12P</div>
<div class="a" style="left:658.6px;width:200px;text-align:center;top:483.3px;line-height:20px;font-size:11.8px;color:#4d5358;-webkit-text-stroke:0.15px #4d5358;">71</div>
<div class="a" style="left:698.4px;width:200px;text-align:center;top:483.3px;line-height:20px;font-size:11.8px;color:#4d5358;-webkit-text-stroke:0.15px #4d5358;">72</div>
<div class="a" style="left:738.2px;width:200px;text-align:center;top:483.3px;line-height:20px;font-size:11.8px;color:#4d5358;-webkit-text-stroke:0.15px #4d5358;">73</div>
<div class="a" style="left:778.0px;width:200px;text-align:center;top:483.3px;line-height:20px;font-size:11.8px;color:#4d5358;-webkit-text-stroke:0.15px #4d5358;">74</div>
<div class="a" style="left:817.8px;width:200px;text-align:center;top:483.3px;line-height:20px;font-size:11.8px;color:#4d5358;-webkit-text-stroke:0.15px #4d5358;">75</div>
<div class="a" style="left:857.6px;width:200px;text-align:center;top:483.3px;line-height:20px;font-size:11.8px;color:#4d5358;-webkit-text-stroke:0.15px #4d5358;">76</div>
<div class="a" style="left:897.4px;width:200px;text-align:center;top:483.3px;line-height:20px;font-size:11.8px;color:#4d5358;-webkit-text-stroke:0.15px #4d5358;">77</div>
<div class="a" style="left:937.2px;width:200px;text-align:center;top:483.3px;line-height:20px;font-size:11.8px;color:#4d5358;-webkit-text-stroke:0.15px #4d5358;">78</div>
<div class="a" style="left:977.0px;width:200px;text-align:center;top:483.3px;line-height:20px;font-size:11.8px;color:#4d5358;-webkit-text-stroke:0.15px #4d5358;">79</div>
<div class="a" style="left:1016.8px;width:200px;text-align:center;top:483.3px;line-height:20px;font-size:11.8px;color:#4d5358;-webkit-text-stroke:0.15px #4d5358;">80</div>
<div class="a" style="left:270.5px;top:527.7px;width:596px;height:295.3px;background:#fff;border:1px solid #eaecef;border-radius:7px;box-shadow:0 1px 2px rgba(16,24,40,.03)"></div>
<svg class="a" style="left:284.5px;top:545.5px;" width="17" height="17" viewBox="0 0 17 17" fill="none"><rect x=".8" y=".8" width="15.4" height="15.4" rx="3.5" stroke="#2d3136" stroke-width="1.4"/><path d="M4.2 7.5v2M6.3 6v5M8.5 4.5v8M10.7 6v5M12.8 7.5v2" stroke="#2d3136" stroke-width="1.1" stroke-linecap="round"/></svg>
<div class="a" style="left:309.4px;top:544.5px;line-height:20px;font-size:13.9px;color:#1d2125;-webkit-text-stroke:0.25px #1d2125;">Meeting Durations</div>
<div class="a" style="left:773px;top:541.5px;width:80.5px;height:26px;background:#fff;border:1px solid #e3e5e8;border-radius:7px"></div>
<div class="a" style="left:785px;top:544.5px;line-height:20px;font-size:12.2px;color:#2d3136;-webkit-text-stroke:0.25px #2d3136;">See All</div>
<svg class="a" style="left:832px;top:551.0px;" width="10" height="7" viewBox="0 0 10 7" fill="none"><path d="M1 1.3l4 4 4-4" stroke="#2d3136" stroke-width="1.3" stroke-linecap="round" stroke-linejoin="round"/></svg>
<div class="a" style="left:282.3px;top:580.3px;width:571px;height:32.5px;background:#f4f5f6;border-radius:8px"></div>
<div class="a" style="left:293.2px;top:586.5px;line-height:20px;font-size:12.1px;color:#2d3136;-webkit-text-stroke:0.25px #2d3136;">Source</div>
<svg class="a" style="left:334.5px;top:590.5px;" width="9" height="12" viewBox="0 0 9 12" fill="none"><path d="M2 4.5l2.5-2.5 2.5 2.5M2 7.5l2.5 2.5 2.5-2.5" stroke="#2d3136" stroke-width="1.1" stroke-linecap="round" stroke-linejoin="round"/></svg>
<div class="a" style="left:506.5px;top:586.5px;line-height:20px;font-size:12.1px;color:#2d3136;-webkit-text-stroke:0.25px #2d3136;">Date</div>
<div class="a" style="left:615.8px;top:586.5px;line-height:20px;font-size:12.1px;color:#2d3136;-webkit-text-stroke:0.25px #2d3136;">Duration Time</div>
<div class="a" style="left:725px;top:586.5px;line-height:20px;font-size:12.1px;color:#2d3136;-webkit-text-stroke:0.25px #2d3136;">Status</div>
<svg class="a" style="left:295px;top:626.8px;" width="16" height="12" viewBox="0 0 16 12" fill="none"><path d="M1 11.5V2.8L8 8l7-5.2v8.7" stroke="none"/><path d="M0 2.2v8.3a1 1 0 0 0 1 1h2.3V5.2z" fill="#4285f4"/><path d="M12.7 11.5H15a1 1 0 0 0 1-1V2.2l-3.3 3z" fill="#34a853"/><path d="M12.7 1.6v3.6L16 2.2V1.5c0-1.1-1.2-1.7-2.1-1.1z" fill="#fbbc04"/><path d="M3.3 5.2V1.6L8 5.1l4.7-3.5v3.6L8 8.7z" fill="#ea4335"/><path d="M0 1.5v.7l3.3 3V1.6L2.1.4C1.2-.2 0 .4 0 1.5z" fill="#c5221f"/></svg>
<div class="a" style="left:322.7px;top:622.8px;line-height:20px;font-size:12.1px;color:#2d3136;-webkit-text-stroke:0.25px #2d3136;">Your First readout</div>
<div class="a" style="left:506.5px;top:622.8px;line-height:20px;font-size:12.4px;color:#5b6166;-webkit-text-stroke:0.15px #5b6166;">04/01/2025</div>
<div class="a" style="left:615.8px;top:622.8px;line-height:20px;font-size:11.8px;color:#5b6166;-webkit-text-stroke:0.15px #5b6166;">1:30 Hours</div>
<div class="a" style="left:725px;top:623.3px;width:64.5px;height:19px;background:#fdab12;border-radius:5px"></div>
<div class="a" style="left:725px;top:622.8px;line-height:20px;font-size:10.3px;color:#fff;-webkit-text-stroke:0.15px #fff;width:64.5px;text-align:center;">Processing</div>
<svg class="a" style="left:837px;top:626.8px;" width="3" height="12" viewBox="0 0 3 12" fill="none"><circle cx="1.5" cy="2" r="1.05" fill="#2d3136"/><circle cx="1.5" cy="6" r="1.05" fill="#2d3136"/><circle cx="1.5" cy="10" r="1.05" fill="#2d3136"/></svg>
<svg class="a" style="left:294.3px;top:663.4px;" width="17" height="17" viewBox="0 0 17 17" fill="none"><rect width="17" height="17" rx="4" fill="#4a8cff"/><rect x="3.2" y="5.3" width="7.2" height="6.4" rx="1.3" fill="#fff"/><path d="M11 7.6l3-2v5.8l-3-2z" fill="#fff"/></svg>
<div class="a" style="left:322.7px;top:661.9px;line-height:20px;font-size:12.1px;color:#2d3136;-webkit-text-stroke:0.25px #2d3136;">Label: Marketing Strategy</div>
<div class="a" style="left:506.5px;top:661.9px;line-height:20px;font-size:12.4px;color:#5b6166;-webkit-text-stroke:0.15px #5b6166;">03/01/2025</div>
<div class="a" style="left:615.8px;top:661.9px;line-height:20px;font-size:11.8px;color:#5b6166;-webkit-text-stroke:0.15px #5b6166;">2:30 Hours</div>
<div class="a" style="left:725px;top:662.4px;width:57.5px;height:19px;background:#10c45a;border-radius:5px"></div>
<div class="a" style="left:725px;top:661.9px;line-height:20px;font-size:10.3px;color:#fff;-webkit-text-stroke:0.15px #fff;width:57.5px;text-align:center;">Complete</div>
<svg class="a" style="left:837px;top:665.9px;" width="3" height="12" viewBox="0 0 3 12" fill="none"><circle cx="1.5" cy="2" r="1.05" fill="#2d3136"/><circle cx="1.5" cy="6" r="1.05" fill="#2d3136"/><circle cx="1.5" cy="10" r="1.05" fill="#2d3136"/></svg>
<svg class="a" style="left:297px;top:705px;" width="12" height="12" viewBox="0 0 12 12" fill="none"><rect x="4.6" y="0" width="2.2" height="5.5" rx="1.1" fill="#36c5f0"/><rect x="0" y="5.2" width="5.5" height="2.2" rx="1.1" fill="#36c5f0" transform="translate(0,-0.6)"/><rect x="7.2" y="4.6" width="5" height="2.2" rx="1.1" fill="#2eb67d"/><rect x="5.2" y="6.5" width="2.2" height="5.5" rx="1.1" fill="#ecb22e"/><rect x="0" y="5.4" width="5" height="2.2" rx="1.1" fill="#e01e5a"/><rect x="7.5" y="0.5" width="2.2" height="4.5" rx="1.1" fill="#2eb67d"/><rect x="2.3" y="7" width="2.2" height="4.5" rx="1.1" fill="#e01e5a"/><rect x="7" y="7.2" width="4.5" height="2.2" rx="1.1" fill="#ecb22e"/></svg>
<div class="a" style="left:322.7px;top:701px;line-height:20px;font-size:12.1px;color:#2d3136;-webkit-text-stroke:0.25px #2d3136;">Sample - Meeting Report</div>
<div class="a" style="left:506.5px;top:701px;line-height:20px;font-size:12.4px;color:#5b6166;-webkit-text-stroke:0.15px #5b6166;">02/01/2025</div>
<div class="a" style="left:615.8px;top:701px;line-height:20px;font-size:11.8px;color:#5b6166;-webkit-text-stroke:0.15px #5b6166;">2:00 Hours</div>
<div class="a" style="left:725px;top:701.5px;width:64.5px;height:19px;background:#fdab12;border-radius:5px"></div>
<div class="a" style="left:725px;top:701px;line-height:20px;font-size:10.3px;color:#fff;-webkit-text-stroke:0.15px #fff;width:64.5px;text-align:center;">Processing</div>
<svg class="a" style="left:837px;top:705px;" width="3" height="12" viewBox="0 0 3 12" fill="none"><circle cx="1.5" cy="2" r="1.05" fill="#2d3136"/><circle cx="1.5" cy="6" r="1.05" fill="#2d3136"/><circle cx="1.5" cy="10" r="1.05" fill="#2d3136"/></svg>
<svg class="a" style="left:294px;top:743.0px;" width="18" height="15" viewBox="0 0 18 15" fill="none"><path d="M0.2 0.9H8A3.9 3.9 0 0 1 0.2 0.9Z M10 0.9H16.8L10 9Z M1 13.7H8V5.6Z M10 13.7A3.7 3.7 0 0 1 17.4 13.7Z" fill="#03363d"/></svg>
<div class="a" style="left:322.7px;top:740.5px;line-height:20px;font-size:12.1px;color:#2d3136;-webkit-text-stroke:0.25px #2d3136;">Example - Meeting Summary</div>
<div class="a" style="left:506.5px;top:740.5px;line-height:20px;font-size:12.4px;color:#5b6166;-webkit-text-stroke:0.15px #5b6166;">01/01/2025</div>
<div class="a" style="left:615.8px;top:740.5px;line-height:20px;font-size:11.8px;color:#5b6166;-webkit-text-stroke:0.15px #5b6166;">3:30 Hours</div>
<div class="a" style="left:725px;top:741.0px;width:57.5px;height:19px;background:#10c45a;border-radius:5px"></div>
<div class="a" style="left:725px;top:740.5px;line-height:20px;font-size:10.3px;color:#fff;-webkit-text-stroke:0.15px #fff;width:57.5px;text-align:center;">Complete</div>
<svg class="a" style="left:837px;top:744.5px;" width="3" height="12" viewBox="0 0 3 12" fill="none"><circle cx="1.5" cy="2" r="1.05" fill="#2d3136"/><circle cx="1.5" cy="6" r="1.05" fill="#2d3136"/><circle cx="1.5" cy="10" r="1.05" fill="#2d3136"/></svg>
<svg class="a" style="left:294px;top:781.3px;" width="17.5" height="17" viewBox="0 0 17.5 17" fill="none"><g stroke="#ff4f00" stroke-width="3.2" stroke-linecap="butt"><path d="M8.75 0v17M0 8.5h17.5M2.6 2.4l12.3 12.2M14.9 2.4L2.6 14.6"/></g><circle cx="8.75" cy="8.5" r="2.6" fill="#fff"/></svg>
<div class="a" style="left:322.7px;top:779.8px;line-height:20px;font-size:12.1px;color:#2d3136;-webkit-text-stroke:0.25px #2d3136;">Draft - Collaboration Notes</div>
<div class="a" style="left:506.5px;top:779.8px;line-height:20px;font-size:12.4px;color:#5b6166;-webkit-text-stroke:0.15px #5b6166;">31/12/2024</div>
<div class="a" style="left:615.8px;top:779.8px;line-height:20px;font-size:11.8px;color:#5b6166;-webkit-text-stroke:0.15px #5b6166;">1:30 Hours</div>
<div class="a" style="left:725px;top:780.3px;width:64.5px;height:19px;background:#fdab12;border-radius:5px"></div>
<div class="a" style="left:725px;top:779.8px;line-height:20px;font-size:10.3px;color:#fff;-webkit-text-stroke:0.15px #fff;width:64.5px;text-align:center;">Processing</div>
<svg class="a" style="left:837px;top:783.8px;" width="3" height="12" viewBox="0 0 3 12" fill="none"><circle cx="1.5" cy="2" r="1.05" fill="#2d3136"/><circle cx="1.5" cy="6" r="1.05" fill="#2d3136"/><circle cx="1.5" cy="10" r="1.05" fill="#2d3136"/></svg>
<div class="a" style="left:880.3px;top:527.7px;width:269.5px;height:295.3px;background:#fff;border:1px solid #eaecef;border-radius:7px;box-shadow:0 1px 2px rgba(16,24,40,.03)"></div>
<svg class="a" style="left:895.5px;top:547px;" width="15" height="15" viewBox="0 0 15 15" fill="none"><path d="M1.8 2.8a1.6 1.6 0 0 1 1.6-1.6h8.2a1.6 1.6 0 0 1 1.6 1.6v6.4l-4.5 4.6H3.4a1.6 1.6 0 0 1-1.6-1.6z" stroke="#2d3136" stroke-width="1.4" stroke-linejoin="round"/><path d="M8.7 13.8V9.4h4.5" stroke="#2d3136" stroke-width="1.4" stroke-linejoin="round"/></svg>
<div class="a" style="left:919.4px;top:544.3px;line-height:20px;font-size:13.6px;color:#1d2125;-webkit-text-stroke:0.25px #1d2125;">Meeting Size</div>
<div class="a" style="left:1056.8px;top:541px;width:80.5px;height:26px;background:#fff;border:1px solid #e3e5e8;border-radius:7px"></div>
<div class="a" style="left:1068.8px;top:544px;line-height:20px;font-size:12.2px;color:#2d3136;-webkit-text-stroke:0.25px #2d3136;">See All</div>
<svg class="a" style="left:1115.8px;top:550.5px;" width="10" height="7" viewBox="0 0 10 7" fill="none"><path d="M1 1.3l4 4 4-4" stroke="#2d3136" stroke-width="1.3" stroke-linecap="round" stroke-linejoin="round"/></svg>
<div class="a" style="left:891px;top:579px;width:245px;height:1px;background:#eceef0"></div>
<svg class="a" style="left:0px;top:0px;" width="1200" height="858" viewBox="0 0 1200 858" fill="none"><path d="M998.1 586V795" stroke="#f6f7f8" stroke-width="1"/><path d="M1044.1 586V795" stroke="#f6f7f8" stroke-width="1"/><path d="M1090.1 586V795" stroke="#f6f7f8" stroke-width="1"/></svg>
<div class="a" style="left:952.1px;top:593.1px;width:175.89999999999998px;height:13px;background:#5d5af0;border-radius:2px"></div>
<div class="a" style="left:892.8px;top:590.4px;line-height:20px;font-size:10.4px;color:#363b40;-webkit-text-stroke:0.15px #363b40;">Design</div>
<div class="a" style="left:952.1px;top:612.8000000000001px;width:103.10000000000002px;height:13px;background:#5d5af0;border-radius:2px"></div>
<div class="a" style="left:892.8px;top:610.1px;line-height:20px;font-size:10.4px;color:#363b40;-webkit-text-stroke:0.15px #363b40;">Pixem</div>
<div class="a" style="left:952.1px;top:632.5px;width:148.89999999999998px;height:13px;background:#5d5af0;border-radius:2px"></div>
<div class="a" style="left:892.8px;top:629.8px;line-height:20px;font-size:10.4px;color:#363b40;-webkit-text-stroke:0.15px #363b40;">Pixel IT</div>
<div class="a" style="left:952.1px;top:652.2px;width:148.89999999999998px;height:13px;background:#5d5af0;border-radius:2px"></div>
<div class="a" style="left:892.8px;top:649.5px;line-height:20px;font-size:10.4px;color:#363b40;-webkit-text-stroke:0.15px #363b40;">Developer</div>
<div class="a" style="left:952.1px;top:671.9px;width:160.89999999999998px;height:13px;background:#5d5af0;border-radius:2px"></div>
<div class="a" style="left:892.8px;top:669.1999999999999px;line-height:20px;font-size:10.4px;color:#363b40;-webkit-text-stroke:0.15px #363b40;">Designer</div>
<div class="a" style="left:952.1px;top:691.6px;width:52.89999999999998px;height:13px;background:#08c557;border-radius:2px"></div>
<div class="a" style="left:892.8px;top:688.9px;line-height:20px;font-size:10.4px;color:#363b40;-webkit-text-stroke:0.15px #363b40;">Employee</div>
<div class="a" style="left:952.1px;top:711.3px;width:178.10000000000002px;height:13px;background:#08c557;border-radius:2px"></div>
<div class="a" style="left:892.8px;top:708.5999999999999px;line-height:20px;font-size:10.4px;color:#363b40;-webkit-text-stroke:0.15px #363b40;">Draft</div>
<div class="a" style="left:952.1px;top:731.0px;width:128.30000000000007px;height:13px;background:#08c557;border-radius:2px"></div>
<div class="a" style="left:892.8px;top:728.3px;line-height:20px;font-size:10.4px;color:#363b40;-webkit-text-stroke:0.15px #363b40;">Example</div>
<div class="a" style="left:952.1px;top:750.7px;width:166.30000000000007px;height:13px;background:#08c557;border-radius:2px"></div>
<div class="a" style="left:892.8px;top:748.0px;line-height:20px;font-size:10.4px;color:#363b40;-webkit-text-stroke:0.15px #363b40;">My Team</div>
<div class="a" style="left:952.1px;top:770.4px;width:140.69999999999993px;height:13px;background:#08c557;border-radius:2px"></div>
<div class="a" style="left:892.8px;top:767.3px;line-height:20px;font-size:10.4px;color:#363b40;-webkit-text-stroke:0.15px #363b40;">My</div>
<div class="a" style="left:892.8px;top:780.4px;line-height:20px;font-size:10.4px;color:#363b40;-webkit-text-stroke:0.15px #363b40;">Meeting</div>
<div class="a" style="left:852.1px;width:200px;text-align:center;top:792.2px;line-height:20px;font-size:10.6px;color:#5b6166;">0</div>
<div class="a" style="left:898.1px;width:200px;text-align:center;top:792.2px;line-height:20px;font-size:10.6px;color:#5b6166;">10</div>
<div class="a" style="left:944.0999999999999px;width:200px;text-align:center;top:792.2px;line-height:20px;font-size:10.6px;color:#5b6166;">20</div>
<div class="a" style="left:990.0999999999999px;width:200px;text-align:center;top:792.2px;line-height:20px;font-size:10.6px;color:#5b6166;">30</div>
<div class="a" style="left:1036.1px;width:200px;text-align:center;top:792.2px;line-height:20px;font-size:10.6px;color:#5b6166;">40</div>
<div class="a" style="left:1024.3px;top:638.7px;width:91.3px;height:26.7px;background:#fff;border:1px solid #e6e8eb;border-radius:5px;box-shadow:0 1px 3px rgba(0,0,0,.08)"></div>
<svg class="a" style="left:1100.5px;top:665px;" width="10" height="6" viewBox="0 0 10 6" fill="none"><path d="M0 0L5 5L10 0" fill="#fff" stroke="#e6e8eb" stroke-width="1"/><path d="M0.5 -0.5H9.5" stroke="#fff" stroke-width="1.5"/></svg>
<div class="a" style="left:1031.4px;top:642px;line-height:20px;font-size:10.4px;color:#2d3136;-webkit-text-stroke:0.15px #2d3136;letter-spacing:-0.2px;">Size=&nbsp; 35 People</div>
<div class="a" style="left:1102px;top:674px;width:8px;height:8px;background:#5b54e8;border:1.5px solid #fff;border-radius:50%;box-shadow:0 0 0 1px #6a8bd8"></div>
<svg class="a" style="left:1103px;top:676px;" width="14" height="17" viewBox="0 0 14 17" fill="none"><path d="M4 1.5a1.2 1.2 0 0 1 2.4 0V7l.3-1.3a1.1 1.1 0 0 1 2.2 .3l.1-.3a1.1 1.1 0 0 1 2.1.5v.5a1.1 1.1 0 0 1 2.1.4v4c0 2.5-1.6 4.5-4 4.5H7c-1.8 0-2.6-.9-3.6-2.4L1.2 9.3a1.1 1.1 0 0 1 1.7-1.4L4 9z" fill="#fff" stroke="#222" stroke-width="1" stroke-linejoin="round"/><path d="M7 10v3M9 10v3M11 10v3" stroke="#222" stroke-width=".8"/></svg>
</div></div>
</body></html>
